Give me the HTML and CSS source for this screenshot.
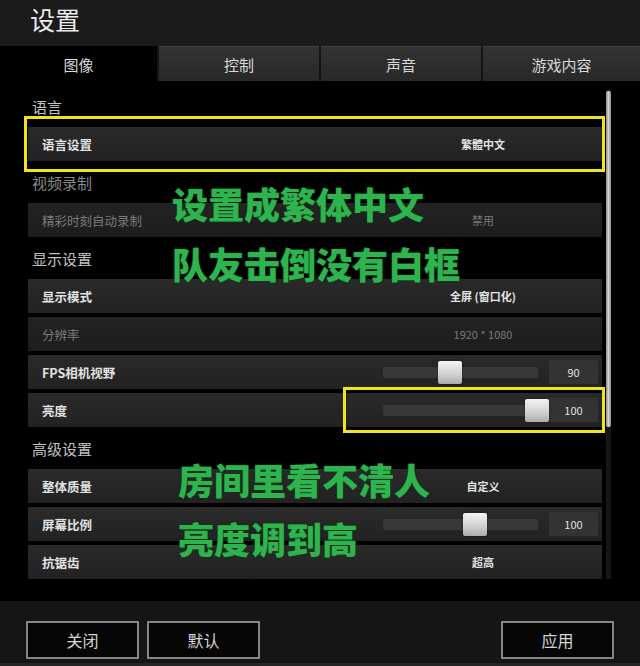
FILE: index.html
```html
<!DOCTYPE html>
<html lang="zh-CN">
<head>
<meta charset="utf-8">
<title>设置</title>
<link rel="stylesheet" href="styles.css">
</head>
<body>
<div class="app">
  <header class="header">设置</header>
  <nav class="tabs">
    <div class="tab active">图像</div>
    <div class="tab">控制</div>
    <div class="tab">声音</div>
    <div class="tab">游戏内容</div>
  </nav>
  <main class="main">
    <div class="list">
      <div class="section">语言</div>
      <div class="row text"><span class="label">语言设置</span><span class="value">繁體中文</span></div>
      <div class="section dim">视频录制</div>
      <div class="row text disabled"><span class="label">精彩时刻自动录制</span><span class="value">禁用</span></div>
      <div class="section">显示设置</div>
      <div class="row text"><span class="label">显示模式</span><span class="value">全屏 (窗口化)</span></div>
      <div class="row text disabled"><span class="label">分辨率</span><span class="value">1920 * 1080</span></div>
      <div class="row slider-row"><span class="label">FPS相机视野</span><span class="track"><span class="knob" style="left:55px"></span></span><span class="box">90</span></div>
      <div class="row slider-row"><span class="label">亮度</span><span class="track"><span class="knob" style="left:142px"></span></span><span class="box">100</span></div>
      <div class="section">高级设置</div>
      <div class="row text"><span class="label">整体质量</span><span class="value">自定义</span></div>
      <div class="row slider-row"><span class="label">屏幕比例</span><span class="track"><span class="knob" style="left:80px"></span></span><span class="box">100</span></div>
      <div class="row text"><span class="label">抗锯齿</span><span class="value">超高</span></div>
    </div>
    <div class="scrollbar"><div class="thumb"></div></div>

    <div class="mark mark-lang"></div>
    <div class="mark mark-bright"></div>
    <div class="note note1">设置成繁体中文</div>
    <div class="note note2">队友击倒没有白框</div>
    <div class="note note3">房间里看不清人</div>
    <div class="note note4">亮度调到高</div>
  </main>
  <footer class="footer">
    <button class="btn">关闭</button>
    <button class="btn">默认</button>
    <button class="btn apply">应用</button>
  </footer>
</div>
</body>
</html>
```
FILE: styles.css
```css
* { box-sizing: border-box; }
html, body {
  margin: 0;
  padding: 0;
  background: #000;
}
body {
  width: 640px;
  height: 666px;
  overflow: hidden;
  font-family: "Noto Sans CJK SC", "Noto Sans", "Liberation Sans", sans-serif;
  color: #ddd;
}
.app {
  display: flex;
  flex-direction: column;
  height: 666px;
}
.header {
  height: 50px;
  background: #1b1b1b;
  padding: 3px 0 0 30px;
  font-size: 25px;
  line-height: 32px;
  color: #ececec;
}
.tabs {
  display: grid;
  grid-template-columns: 157px 160px 160px 157px;
  gap: 2px;
  height: 38px;
  background: #141414;
}
.tab {
  display: flex;
  align-items: center;
  justify-content: center;
  font-size: 15px;
  color: #d8d8d8;
  background: linear-gradient(#333, #282828);
  border-top: 1px solid #424242;
}
.tab.active {
  background: #000;
  border-top: 1px solid #000;
}
.main {
  position: relative;
  flex: 1;
  background: #000;
  display: flex;
  gap: 4px;
  padding: 8px 0 22px 28px;
}
.list {
  width: 574px;
  overflow: hidden;
  display: flex;
  flex-direction: column;
  gap: 4px;
}
.section {
  flex: none;
  height: 34px;
  display: flex;
  align-items: center;
  padding-left: 4px;
  font-size: 15px;
  color: #c2c2c2;
}
.section.dim { color: #8a8a8a; }
.row {
  flex: none;
  height: 34px;
  display: grid;
  align-items: center;
  background: linear-gradient(#2a2a2a, #222);
  padding-left: 14px;
  font-size: 12.5px;
  font-weight: 700;
  color: #e2e2e2;
}
.row.text {
  grid-template-columns: 1fr 200px;
  padding-right: 19px;
}
.row.slider-row {
  grid-template-columns: 1fr 155px 49px;
  column-gap: 11px;
  padding-right: 4px;
}
.row.disabled {
  color: #7a7a7a;
  font-weight: 400;
  background: linear-gradient(#232323, #1d1d1d);
}
.value {
  text-align: center;
  font-size: 11px;
}
.track {
  position: relative;
  height: 11px;
  background: #383838;
  border-radius: 2px;
}
.knob {
  position: absolute;
  top: -6px;
  width: 24px;
  height: 23px;
  border-radius: 2px;
  background: linear-gradient(#f4f4f4, #cfcfcf 60%, #ababab);
  box-shadow: 0 0 2px rgba(0,0,0,.6);
}
.box {
  height: 24px;
  background: #333;
  display: flex;
  align-items: center;
  justify-content: center;
  font-size: 11px;
  font-weight: 400;
  color: #e0e0e0;
}
.scrollbar {
  width: 5px;
  background: #161616;
}
.thumb {
  height: 336px;
  margin-top: 2px;
  background: linear-gradient(90deg, #8c8c8c, #d0d0d0, #8c8c8c);
  border-radius: 2px;
}
.mark {
  position: absolute;
  border: 3px solid #f1e41d;
}
.mark-lang {
  left: 24px;
  top: 35px;
  width: 581px;
  height: 56px;
}
.mark-bright {
  left: 343px;
  top: 306px;
  width: 262px;
  height: 46px;
}
.note {
  position: absolute;
  font-size: 36px;
  line-height: 40px;
  font-weight: 900;
  color: #2fb34f;
  text-shadow: 0 0 2px #0b3d16, 0 0 1px #0b3d16;
  white-space: nowrap;
}
.note1 { left: 172px; top: 102px; }
.note2 { left: 172px; top: 162px; }
.note3 { left: 178px; top: 378px; }
.note4 { left: 178px; top: 437px; }
.footer {
  height: 68px;
  background: #151515;
  display: flex;
  align-items: flex-start;
  gap: 8px;
  padding: 20px 26px 0 26px;
  border-bottom: 3px solid #262626;
}
.btn {
  width: 113px;
  height: 38px;
  background: #060606;
  border: 2px solid #858585;
  color: #d6d6d6;
  font-family: "Noto Sans CJK SC", "Noto Sans", sans-serif;
  font-size: 16px;
  padding: 0;
}
.btn.apply { margin-left: auto; }
```
